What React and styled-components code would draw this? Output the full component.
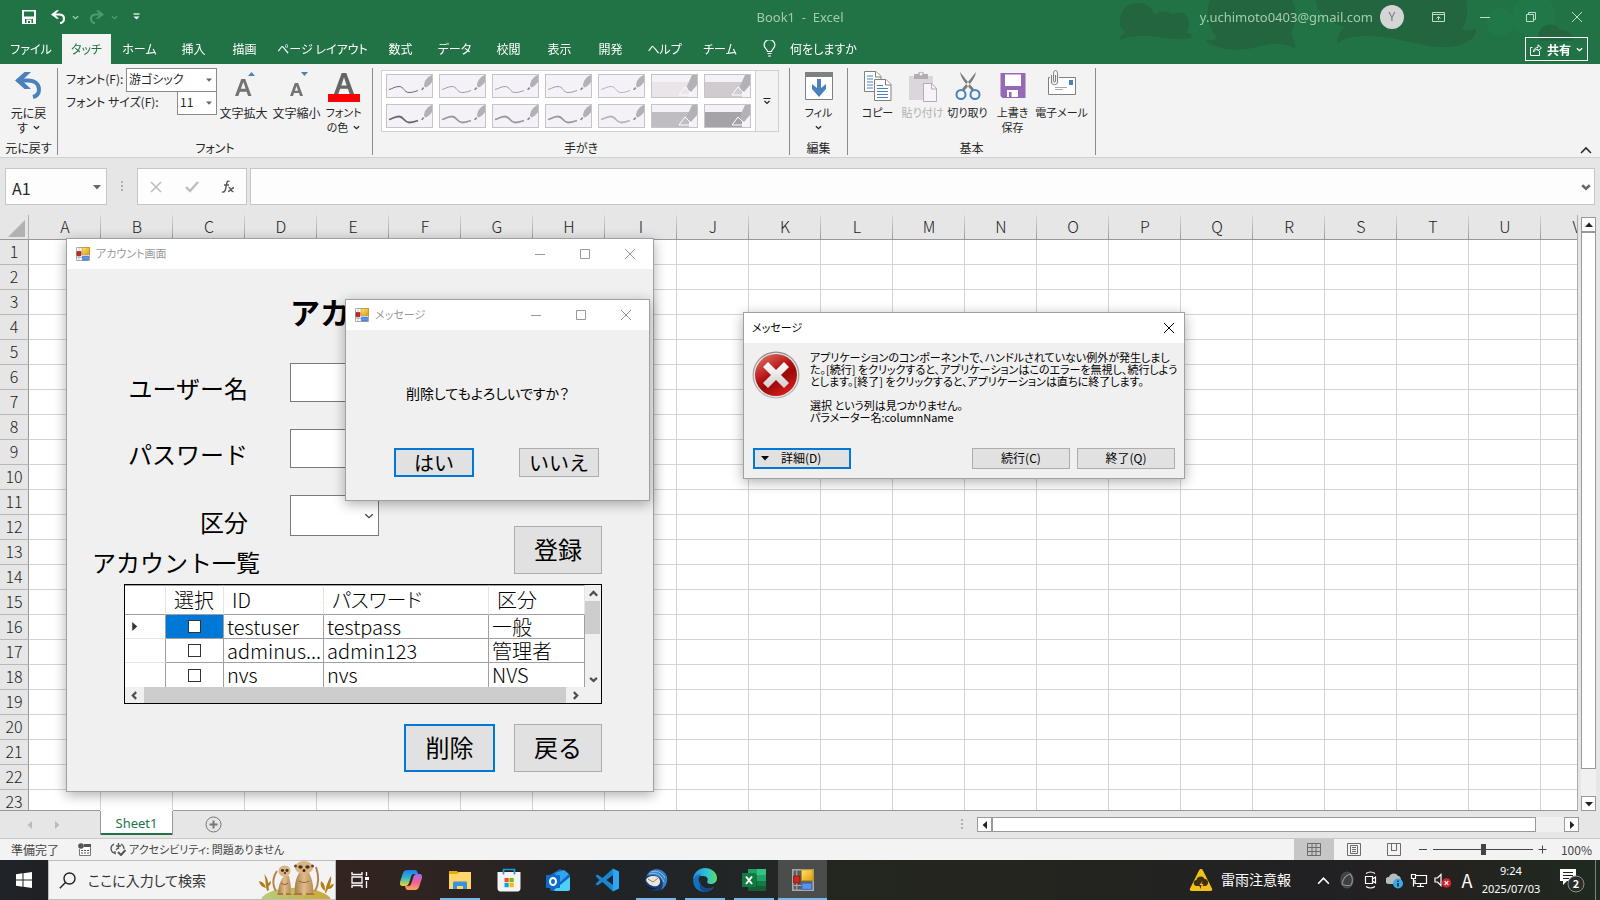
import React from 'react';
import styled, { createGlobalStyle, css } from 'styled-components';

const GlobalStyle = createGlobalStyle`
  * { box-sizing: border-box; }
  body {
    margin: 0;
    overflow: hidden;
    font-family: "Noto Sans CJK JP", "Noto Sans", sans-serif;
    font-size: 12px;
    line-height: 15px;
    color: #262626;
    font-feature-settings: "palt";
  }
  button, input, select {
    font: inherit;
    font-feature-settings: inherit;
    color: inherit;
    margin: 0;
    padding: 0;
    border: 0;
    border-radius: 0;
    background: none;
    outline: 0;
  }
  h1, h2, p { margin: 0; font: inherit; }
  svg { display: block; flex: none; }
`;

const Desktop = styled.div`
  position: relative;
  display: flex;
  flex-direction: column;
  height: 100vh;
  overflow: hidden;
  background: #e6e6e6;
`;

/* ---------- Title bar and tabs ---------- */

const Header = styled.header`
  position: relative;
  flex: none;
  background: #217346;
  color: #fff;
`;

const HeaderArt = styled.svg`
  position: absolute;
  top: 0;
  right: 0;
`;

const TitleBar = styled.div`
  position: relative;
  display: grid;
  grid-template-columns: 1fr auto 1fr;
  align-items: center;
  height: 34px;
  color: #a3cbb3;
  font-family: "Noto Sans", sans-serif;
  font-size: 13px;
`;

const QuickAccess = styled.div`
  display: flex;
  align-items: center;
  gap: 11px;
  padding-left: 22px;
`;

const IconButton = styled.button`
  display: flex;
  align-items: center;
  justify-content: center;
`;

const SaveButton = styled(IconButton)`
  width: 18px;
  justify-content: flex-start;
`;

const SplitButton = styled(IconButton)`
  gap: 7px;
`;

const DocTitle = styled.h1`
  white-space: pre;
  font-size: 13px;
`;

const Account = styled.div`
  display: flex;
  align-items: center;
  justify-content: flex-end;
`;

const Avatar = styled.span`
  width: 24px;
  height: 24px;
  margin: 0 12px 0 7px;
  border-radius: 50%;
  background: #d5d5d5;
  color: #6a7f74;
  font-size: 12px;
  line-height: 24px;
  text-align: center;
`;

const CaptionButton = styled(IconButton)`
  width: 46px;
  height: 30px;
  align-self: flex-start;
`;

const TabRow = styled.nav`
  position: relative;
  display: flex;
  align-items: flex-end;
  height: 30px;
  padding-right: 12px;
`;

const Tab = styled.button`
  flex: none;
  width: ${p => p.$w ? `${p.$w}px` : 'auto'};
  height: 30px;
  padding-bottom: 2px;
  text-align: center;
  white-space: nowrap;
  color: #fff;
  ${p => p.$active && css`
    background: #f3f3f3;
    color: #217346;
  `}
`;

const TellMe = styled(Tab)`
  display: flex;
  align-items: center;
  gap: 14px;
  padding-left: 16px;
  margin-right: auto;
`;

const ShareButton = styled.button`
  display: flex;
  align-items: center;
  gap: 5px;
  height: 24px;
  margin-bottom: 3px;
  padding: 0 4px;
  border: 1px solid #fff;
  font-weight: 700;
`;

/* ---------- Ribbon ---------- */

const Ribbon = styled.section`
  display: flex;
  flex: none;
  height: 94px;
  padding-top: 4px;
  background: #f3f3f3;
  border-bottom: 1px solid #d0d0d0;
`;

const Group = styled.div`
  display: flex;
  flex-direction: column;
  justify-content: space-between;
  height: 87px;
  padding: 0 ${p => p.$pad || 0}px;
  border-right: 1px solid #8a8a8a;
`;

const GroupTools = styled.div`
  display: flex;
`;

const GroupLabel = styled.div`
  text-align: center;
  white-space: nowrap;
  line-height: 14px;
`;

const BigButton = styled.button`
  display: flex;
  flex-direction: column;
  align-items: center;
  width: ${p => p.$wide ? 53 : 45}px;
  font-size: ${p => p.$kana ? 11 : 12}px;
  white-space: nowrap;
  color: ${p => p.disabled ? '#b1b1b1' : '#262626'};
`;

const SmallButton = styled(BigButton)`
  width: 41px;
`;

const RowButton = styled(BigButton)`
  width: 57px;
`;

const LabelLine = styled.span`
  display: flex;
  align-items: center;
  gap: 5px;
  height: 15px;
`;

const FontFields = styled.div`
  width: 151px;
`;

const FontField = styled.div`
  display: flex;
  align-items: center;
  justify-content: space-between;
  height: 23px;
  white-space: nowrap;
  label { padding-bottom: 2px; }
`;

const Combo = styled.span`
  display: grid;
  align-items: center;
  width: ${p => p.$narrow ? 40 : 91}px;
  height: 24px;
  border: 1px solid #8a8a8a;
  background: #fff;
  > * { grid-area: 1 / 1; }
  svg { justify-self: end; margin-right: 4px; pointer-events: none; }
  select { appearance: none; height: 100%; width: 100%; padding: 0 0 2px 2px; }
`;

const Gallery = styled.div`
  display: flex;
  margin: 2px 2px 0 0;
  border: 1px solid #d0d0d0;
  background: #fff;
`;

const PenGrid = styled.div`
  display: grid;
  grid-template-columns: repeat(7, 47px);
  gap: 6px;
  padding: 3px 4px;
`;

const PenButton = styled.button`
  height: 24px;
  border: 1px solid #c6c4c6;
  background: #f5f1f8;
`;

const GalleryMore = styled(IconButton)`
  width: 23px;
  border-left: 1px solid #d0d0d0;
  background: #f3f3f3;
`;

const CollapseButton = styled(IconButton)`
  align-self: flex-end;
  margin: 0 7px 2px auto;
  width: 14px;
  height: 10px;
`;

/* ---------- Formula bar ---------- */

const FormulaBar = styled.div`
  display: flex;
  flex: none;
  align-items: center;
  height: 57px;
  padding: 0 5px 0 5px;
`;

const BarBox = styled.div`
  display: flex;
  align-items: center;
  justify-content: space-between;
  height: 37px;
  border: 1px solid #c6c6c6;
  background: #fdfdfd;
`;

const NameBox = styled(BarBox)`
  width: 102px;
  padding: 0 5px 0 6px;
  input { width: 60px; padding-top: 2px; font-size: 16px; line-height: 20px; }
`;

const FormulaTools = styled(BarBox)`
  width: 110px;
  margin: 0 3px 0 14px;
  padding: 0 11px;
`;

const FormulaInput = styled(BarBox)`
  flex: 1;
  padding: 0 3px 0 8px;
  input { flex: 1; height: 100%; font-size: 16px; }
`;

const Dots = styled.span`
  width: 2px;
  height: 11px;
  margin-left: ${p => p.$gap || 0}px;
  background: repeating-linear-gradient(#b0b0b0 0 2px, transparent 2px 4px);
`;

/* ---------- Sheet ---------- */

const SheetArea = styled.main`
  display: grid;
  grid-template-columns: 1fr 22px;
  flex: 1;
  min-height: 0;
`;

const SheetViewport = styled.div`
  min-height: 0;
  overflow: hidden;
  border-bottom: 1px solid #999;
  border-right: 1px solid #ababab;
`;

const SheetTable = styled.table`
  table-layout: fixed;
  width: 1613px;
  border-collapse: separate;
  border-spacing: 0;
  background: #fff;
  font-size: 16px;
  line-height: 20px;
  color: #222;
  th, td { height: 25px; padding: 0 0 2px; font-weight: 300; }
  td { border-right: 1px solid #d4d4d4; border-bottom: 1px solid #d4d4d4; }
`;

const ColumnHead = styled.th`
  border-bottom: 1px solid #999;
  background: linear-gradient(#d8d8d8, #9c9c9c) right / 1px 100% no-repeat #e6e6e6;
`;

const RowHead = styled.th`
  border-right: 1px solid #999;
  border-bottom: 1px solid #b8b8b8;
  background: #e6e6e6;
`;

const Corner = styled.th`
  width: 29px;
  border-right: 1px solid #b0b0b0;
  border-bottom: 1px solid #999;
  background: #e6e6e6;
  svg { margin: 4px 0 0 8px; }
`;

const VerticalBar = styled.div`
  display: flex;
  flex-direction: column;
  width: 15px;
  margin: 2px 0 0 3px;
  background: #f0f0f0;
`;

const HorizontalBar = styled.div`
  display: flex;
  flex: 0 0 602px;
  height: 15px;
  margin: 0 21px 0 14px;
  background: #f0f0f0;
`;

const ArrowButton = styled(IconButton)`
  flex: none;
  width: 15px;
  height: 15px;
  border: 1px solid #999;
  background: #fff;
`;

const Thumb = styled.div`
  border: 1px solid #999;
  background: #fff;
`;

const VerticalThumb = styled(Thumb)`
  flex: 1;
  margin-bottom: 27px;
`;

const HorizontalThumb = styled(Thumb)`
  flex: 1;
  margin-right: 28px;
`;

const SheetTabs = styled.div`
  display: flex;
  flex: none;
  align-items: center;
  height: 27px;
`;

const NavArrows = styled.div`
  display: flex;
  justify-content: space-between;
  width: 100px;
  padding: 0 39px 0 26px;
`;

const SheetTab = styled.button`
  align-self: flex-start;
  width: 73px;
  height: 24px;
  border: solid #999;
  border-width: 0 1px 0;
  background: #fff;
  box-shadow: inset 0 -2px #217346, 0 -1px #fff;
  color: #217346;
  font-family: "Noto Sans", sans-serif;
  font-size: 13px;
`;

const AddSheet = styled(IconButton)`
  margin: 0 auto 0 32px;
`;

const StatusBar = styled.footer`
  display: flex;
  flex: none;
  align-items: center;
  height: 22px;
  padding: 0 0 1px 11px;
  border-top: 1px solid #c8c8c8;
  background: #f3f3f3;
  color: #444;
`;

const StatusItem = styled.span`
  display: flex;
  align-items: center;
  gap: 3px;
  margin-right: 19px;
  font-size: ${p => p.$kana ? 11 : 12}px;
`;

const ViewButton = styled(IconButton)`
  width: 40px;
  height: 21px;
  background: ${p => p.$active ? '#c6c6c6' : 'none'};
`;

const ViewButtons = styled.div`
  display: flex;
  margin-left: auto;
`;

const ZoomSlider = styled.input`
  appearance: none;
  width: 100px;
  height: 14px;
  margin: 0 5px;
  background: linear-gradient(#444, #444) center / 100% 1px no-repeat;
  &::-webkit-slider-thumb {
    appearance: none;
    width: 5px;
    height: 11px;
    background: #444;
  }
`;

const ZoomText = styled.output`
  width: 53px;
  padding-right: 8px;
  text-align: right;
`;

/* ---------- Windows ---------- */

const Window = styled.section`
  position: absolute;
  border: 1px solid #a0a0a0;
  background: #f0f0f0;
  box-shadow: 0 3px 12px rgba(0, 0, 0, 0.32);
  color: #000;
`;

const AccountWindow = styled(Window)`
  left: 66px;
  top: 238px;
  width: 588px;
  height: 554px;
`;

const ConfirmWindow = styled(Window)`
  left: 345px;
  top: 299px;
  width: 305px;
  height: 202px;
`;

const ErrorWindow = styled(Window)`
  left: 743px;
  top: 312px;
  width: 442px;
  height: 167px;
`;

const WindowTitle = styled.header`
  display: flex;
  align-items: center;
  height: 30px;
  padding: 0 ${p => p.$plain ? '0 0 8px' : '1px 0 9px'};
  background: #fff;
  color: ${p => p.$plain ? '#000' : '#999'};
  font-size: 11px;
  h2 { margin: 0 auto 0 ${p => p.$plain ? 0 : 6}px; padding-bottom: 2px; }
`;

const WindowControl = styled(IconButton)`
  width: ${p => p.$plain ? 30 : 45}px;
  height: 30px;
  padding-bottom: 1px;
`;

const AccountBody = styled.div`
  display: flex;
  flex-direction: column;
  padding: 22px 51px 0 0;
  font-size: 24px;
  line-height: 24px;
  font-feature-settings: normal;
`;

const ScreenHeading = styled.h1`
  padding-left: 223px;
  font-size: 30px;
  font-weight: 700;
  line-height: 40px;
`;

const FormRow = styled.div`
  display: flex;
  align-items: flex-end;
  margin-top: 32px;
`;

const FormSide = styled.div`
  flex: 1;
`;

const Fields = styled.div`
  display: grid;
  grid-template-columns: 181px 220px;
  column-gap: 42px;
  row-gap: 27px;
  align-items: end;
  label { padding-bottom: 2px; text-align: right; }
`;

const TextBox = styled.input`
  height: 39px;
  border: 1px solid #7a7a7a;
  background: #fff;
`;

const TypeSelect = styled.span`
  display: grid;
  align-items: center;
  width: 89px;
  height: 41px;
  border: 1px solid #7a7a7a;
  background: #fff;
  > * { grid-area: 1 / 1; }
  svg { justify-self: end; margin-right: 4px; pointer-events: none; }
  select { appearance: none; width: 100%; height: 100%; }
`;

const ListHeading = styled.h2`
  margin: 14px 0 0 25px;
`;

const PushButton = styled.button`
  border: 1px solid #adadad;
  background: #e1e1e1;
  ${p => p.$focus && css`border: 2px solid #0078d7;`}
`;

const FormButton = styled(PushButton)`
  width: ${p => p.$focus ? 91 : 88}px;
  height: 48px;
  padding-bottom: 3px;
`;

const ButtonRow = styled.div`
  display: flex;
  justify-content: flex-end;
  gap: 19px;
  margin-top: 20px;
`;

const DataGrid = styled.div`
  display: grid;
  grid-template-columns: 1fr 16px;
  grid-template-rows: 102px 16px;
  margin: 10px 0 0 57px;
  border: 1px solid #000;
  background: #fff;
`;

const GridTable = styled.table`
  table-layout: fixed;
  width: 460px;
  border-collapse: separate;
  border-spacing: 0;
  font-size: 20px;
  line-height: 22px;
  font-weight: 300;
  font-feature-settings: "palt";
  text-align: left;
  td, th {
    height: 24px;
    padding: 0 0 0 3px;
    border-right: 1px solid #a0a0a0;
    border-bottom: 1px solid #a0a0a0;
    font-weight: 300;
    overflow: hidden;
    white-space: nowrap;
  }
  thead th { height: 30px; padding-left: 8px; border-right-color: #e5e5e5; border-top: 1px solid #a0a0a0; }
  tbody th { padding-left: 5px; border-bottom-color: #e5e5e5; }
  tbody tr:last-child > * { border-bottom: 0; }
`;

const CheckCell = styled.td`
  && { padding: 0 1px 0 0; text-align: center; line-height: 0; background: ${p => p.$selected ? '#0078d7' : '#fff'}; }
  input { appearance: none; width: 13px; height: 13px; border: 1px solid #333; background: #fff; }
`;

const GridVertical = styled.div`
  display: flex;
  flex-direction: column;
  background: #f0f0f0;
`;

const GridHorizontal = styled.div`
  display: flex;
  grid-column: 1 / 3;
  padding-right: 16px;
  background: #f0f0f0;
`;

const GridArrow = styled(IconButton)`
  flex: none;
  width: ${p => p.$side ? 19 : 16}px;
  height: 16px;
`;

const DownArrow = styled(GridArrow)`
  margin-top: auto;
`;

const GridThumb = styled.div`
  flex: ${p => p.$fill ? 1 : '0 0 33px'};
  margin-right: ${p => p.$fill ? 0 : 1}px;
  background: #cdcdcd;
`;

const ConfirmBody = styled.div`
  display: flex;
  flex-direction: column;
  align-items: center;
  padding-top: 53px;
  font-size: 14px;
  line-height: 20px;
  p { padding-right: 20px; }
`;

const ConfirmButtons = styled.div`
  display: flex;
  gap: 45px;
  margin: 45px 2px 0 0;
  font-size: 20px;
  font-feature-settings: normal;
`;

const ConfirmButton = styled(PushButton)`
  width: 80px;
  height: 29px;
  line-height: 20px;
`;

const ErrorBody = styled.div`
  display: flex;
  gap: 10px;
  height: 105px;
  padding: 8px 0 0 8px;
  font-size: 11px;
  line-height: 12px;
  white-space: pre;
`;

const ErrorButtons = styled.div`
  display: flex;
  gap: 7px;
  padding: 0 9px;
  button:first-child { margin-right: auto; }
`;

const ErrorButton = styled(PushButton)`
  display: flex;
  align-items: center;
  justify-content: center;
  gap: 12px;
  width: 98px;
  height: 21px;
  padding-bottom: 2px;
  ${p => p.$focus && css`
    justify-content: flex-start;
    padding-left: 6px;
  `}
`;

/* ---------- Taskbar ---------- */

const Taskbar = styled.footer`
  display: flex;
  flex: none;
  height: 40px;
  background: linear-gradient(90deg, #20242a 0, #1f2023 48px, #33241f 336px, #2c2422 460px, #202427 620px, #222626 760px, #24271e 860px, #23241f 1100px, #212124 1320px, #25211f 1440px, #1f2a20 1600px);
  color: #fff;
`;

const StartButton = styled(IconButton)`
  width: 48px;
`;

const SearchBox = styled.label`
  display: flex;
  align-items: center;
  width: 288px;
  margin-right: 1px;
  border: 1px solid #bdbdbd;
  background: #f3f3f3;
  color: #333;
  input { flex: 1; min-width: 0; margin-left: 12px; font-size: 14px; line-height: 20px; }
  input::placeholder { color: #333; opacity: 1; }
  > svg:first-child { margin-left: 10px; }
`;

const TaskButton = styled(IconButton)`
  width: 49px;
  height: 40px;
  ${p => p.$running && css`
    background: linear-gradient(#76b9ed, #76b9ed) center bottom / 40px 2px no-repeat;
  `}
  ${p => p.$active && css`
    background: linear-gradient(#76b9ed, #76b9ed) center bottom / 100% 2px no-repeat #4b4d4c;
  `}
`;

const Tray = styled.div`
  display: flex;
  align-items: center;
  gap: 4px;
  margin-left: auto;
  padding-right: 4px;
`;

const Weather = styled.button`
  display: flex;
  align-items: center;
  gap: 8px;
  margin-right: 18px;
  padding-bottom: 1px;
  font-size: 14px;
  font-feature-settings: normal;
`;

const TrayIcon = styled(IconButton)`
  width: 20px;
  height: 40px;
`;

const InputMode = styled(TrayIcon)`
  font-size: 18px;
`;

const Clock = styled.time`
  width: 60px;
  margin: 0 14px 0 0;
  font-family: "Noto Sans", sans-serif;
  font-size: 11px;
  line-height: 18px;
  text-align: center;
`;

const ShowDesktop = styled.button`
  height: 40px;
  width: 1px;
  margin-left: 6px;
  background: #7c827c;
`;

/* ---------- Drawings ---------- */

const Chevron = ({ w = 7, color = 'currentColor', up, sw = 1.5 }) => (
  <svg width={w} height={w} viewBox="0 0 8 8" fill="none" stroke={color} strokeWidth={sw}>
    <path d={up ? 'M.7 6 4 2.6 7.3 6' : 'M1 2.6 4 5.4 7 2.6'} />
  </svg>
);

const Triangle = ({ dir = 'down', size = 8, color = '#222' }) => {
  const d = { down: 'M0 2h8L4 6.4z', up: 'M0 6h8L4 1.6z', left: 'M6 0v8L1.6 4z', right: 'M2 0v8l4.400-4z' }[dir];
  return <svg width={size} height={size} viewBox="0 0 8 8"><path d={d} fill={color} /></svg>;
};

const HeaderDrawing = () => (
  <HeaderArt width="500" height="64" viewBox="1100 0 500 64" aria-hidden="true">
    <g fill="#217a4a" opacity=".6">
      <circle cx="1534" cy="16" r="22" />
      <circle cx="1500" cy="22" r="14" />
      <circle cx="1192" cy="24" r="10" opacity=".4" />
    </g>
    <g fill="#22653f">
      <path d="M1120 24c-1-12 6-21 18-21 9 0 14 5 17 12 6-5 14-4 18 0 8-6 16 0 16 9 0 5-1 7-3 9 8 1 8 6-2 6-16 1-28-4-41-3-11 0-17 2-23 4 1-5 3-7 5-8-3-2-5-5-5-8z" />
      <path d="M1210 0h82c5 8 5 20-1 34 3 4 4 9 4 14-14-6-26-5-38-1-18 5-44 3-52-8 6 2 9 1 12-1-9-12-12-26-7-38z" />
      <path d="M1316 0h150c3 12 0 22-4 30 6 1 11 0 14-2 1 12-15 20-36 19-24-1-44-11-70-11-18 0-27 2-33 8 0-8 3-13 8-17-17-5-28-14-29-27z" />
      <path d="M1538 37a12 12 0 0 1 22-7c9 0 14 5 14 11h-34z" />
    </g>
  </HeaderArt>
);

const SaveIcon = () => (
  <svg width="14" height="14" viewBox="0 0 14 14" fill="#fff"><path fillRule="evenodd" d="M0 0h14v14H0zM2 1.500v5h10v-5zM3 9v4h1.500V9.500h5V13H11V9z M6 11h2v2H6z" /></svg>
);

const UndoIcon = ({ color = '#fff', size = 14, flip }) => (
  <svg width={size} height={size} viewBox="0 0 14 14">
    <g transform={flip ? 'translate(14 0) scale(-1 1)' : undefined}>
      <path d="M1.500 4.500h6.500c3 0 5 1.700 5 4.200S11 13 9 13.200" fill="none" stroke={color} strokeWidth="2.200" />
      <path d="M0 4.500 5.600.2H8L3.800 4.500 8 8.800H5.600z" fill={color} />
    </g>
  </svg>
);

const BigUndo = () => (
  <svg width="30" height="37" viewBox="0 0 30 37">
    <path d="M3 12.500h11c7 0 11 3.500 11 9 0 3.500-2 6.500-6 7.500" fill="none" stroke="#4a81bd" strokeWidth="4" />
    <path d="M1 12.500 10.500 4H17l-9 8.500 9 8.500h-6.500z" fill="#4a81bd" />
  </svg>
);

const LetterIcon = ({ kind }) => (
  <svg width="32" height="37" viewBox="0 0 32 37">
    {kind === 'grow' && <>
      <path fillRule="evenodd" fill="#737373" d="M7 28 13.300 11h3.900L23.500 28h-3.400l-1.500-4.300h-6.700L10.300 28zm5.900-7.200h4.800L15.300 14z" />
      <path d="M20 8h7l-3.500-4z" fill="#4a81bd" />
    </>}
    {kind === 'shrink' && <>
      <path fillRule="evenodd" fill="#737373" d="M9 28 13.800 15h3.300L22 28h-3l-1-3h-5l-1 3zm4.800-5.300h3.300L15.500 18z" />
      <path d="M20 4h7l-3.500 4z" fill="#4a81bd" />
    </>}
    {kind === 'color' && <>
      <path fillRule="evenodd" fill="#666" d="M6 26 13.700 5h4.600L26 26h-4.300l-1.800-5.200h-7.800L10.300 26zm7.300-8.600h5.400L16 9.200z" />
      <path d="M0 26h32v8H0z" fill="#f00" />
    </>}
  </svg>
);

const PenStroke = ({ color, thick }) => (
  <svg width="45" height="22" viewBox="0 0 45 22">
    <path d="M2 14.500c4-1 6-3 10-3 5 0 5 6 10 6 4 0 6-1 9-2" fill="none" stroke={color} strokeWidth={thick ? 1.800 : 1} />
    <path d="M34 14.500 36 12l1.300 1.300-2 2z" fill="#8a888a" />
    <path d="M37 11c0-5 3-9 8-11v7c-2 3-4 4.500-6.500 5.500z" fill="#b3b1b5" />
  </svg>
);

const Highlighter = ({ color }) => (
  <svg width="45" height="22" viewBox="0 0 45 22">
    <path d="M0 7h37v15H0z" fill={color} />
    <path d="m27 20 6-8 6 6-2 2z" fill="none" stroke="#fff" />
    <path d="M35 11 40 0h5v10l-6 7c-2-1-4-3-4-6z" fill="#b3b1b5" />
  </svg>
);

const FillIcon = () => (
  <svg width="28" height="37" viewBox="0 0 28 37">
    <path d="M.5 4.500h27v27H.5z" fill="#fff" stroke="#808080" />
    <path d="M0 4h28v5H0z" fill="#808080" />
    <path d="M12 11h4v9l5-4v5l-7 8-7-8v-5l5 4z" fill="#4a81bd" />
  </svg>
);

const CopyIcon = () => (
  <svg width="28" height="37" viewBox="0 0 28 37" fill="#fff" stroke="#808080">
    <path d="M.5 3.500H12l5 5v15H.5z" /><path d="M11.500 3.500V9H17" />
    <path d="M3 8h6M3 11h6M3 14h6M3 17h6M3 20h6" stroke="#4a81bd" />
    <path d="M10.500 11.500H22l5 5v16H10.500z" /><path d="M21.500 11.500V17H27" />
    <path d="M13 17.500h6M13 20.500h11M13 23.500h11M13 26.500h11M13 29.500h11" stroke="#4a81bd" />
  </svg>
);

const PasteIcon = () => (
  <svg width="28" height="37" viewBox="2 0 28 37">
    <path d="M2 8h24v24H2z" fill="#dad6db" />
    <path d="M7 6h4c0-3 6-3 6 0h4v5H7z" fill="#b1adb3" /><circle cx="14" cy="6" r="1.500" fill="#f3f3f3" />
    <path d="M16.500 15.500H25l4.500 5v13h-13z" fill="#f8f3fa" stroke="#b1adb3" /><path d="M24.500 15.500V21h5" fill="none" stroke="#b1adb3" />
  </svg>
);

const CutIcon = () => (
  <svg width="26" height="37" viewBox="0 0 26 37" fill="none">
    <path d="M5 4c1 6 5 11 12 19l2-2C13 14 8 8 5 4zM21 4c-1 6-5 11-12 19l-2-2C13 14 18 8 21 4z" fill="#7b7b7b" />
    <circle cx="6" cy="26.500" r="4.500" stroke="#4a81bd" strokeWidth="2" /><circle cx="20" cy="26.500" r="4.500" stroke="#4a81bd" strokeWidth="2" />
  </svg>
);

const PurpleSave = () => (
  <svg width="26" height="37" viewBox="0 0 26 37">
    <path d="M.5 5h25v25h-23l-2-2z" fill="#9668b8" />
    <path d="M5 6.500h16V18H5zM7 22h11v7h-6.500v-5H9v5H7z" fill="#fff" />
  </svg>
);

const MailIcon = () => (
  <svg width="28" height="37" viewBox="0 0 28 37" fill="none" stroke="#808080">
    <path d="M.5 9.500h27v17H.5z" fill="#fff" />
    <path d="M21 12h4v5h-4z" fill="#4a81bd" stroke="none" />
    <path d="M7 19.500h12M7 21.500h8" stroke="#aaa" />
    <path d="M3.500 8v6c0 3.500 6 3.500 6 0V5.500c0-4-4-4-4 0V13c0 1.500 2 1.500 2 0V7" stroke="#f3f3f3" strokeWidth="3" />
    <path d="M3.500 7v7c0 3.500 6 3.500 6 0V5.500c0-4-4-4-4 0V13c0 1.500 2 1.500 2 0V7" />
  </svg>
);

const BulbIcon = () => (
  <svg width="13" height="17" viewBox="0 0 13 17" fill="none" stroke="#fff" strokeWidth="1.200">
    <path d="M4.500 11.500c0-2-3.400-3-3.400-6.400a5.400 5.400 0 0 1 10.800 0c0 3.400-3.400 4.400-3.400 6.400zM4.500 13.500h4M5 16h3" />
  </svg>
);

const ShareIcon = () => (
  <svg width="12" height="13" viewBox="0 0 12 13" fill="none" stroke="#fff">
    <path d="M2.500 4.500h-2v8h9V8M3.500 9c0-3 2-4.500 4.500-4.500V1.800L11.400 5 8 8V6.300C6 6.300 4.500 7.300 3.500 9z" />
  </svg>
);

const FormIcon = ({ size = 14, gray }) => (
  <svg width={size} height={size} viewBox="0 0 14 14">
    <defs><linearGradient id="gold" x2="1" y2="1"><stop stopColor="#ffe27a" /><stop offset="1" stopColor="#dd9d00" /></linearGradient></defs>
    <path d="M.5.500h13v13H.5z" fill={gray ? '#5c5c5c' : '#fff'} stroke="#aaa" />
    <path d="M3 1v12M1 10.500h12" stroke="#aaa" strokeWidth=".7" />
    <path d="M6 .5h7.500v7H6z" fill="url(#gold)" stroke="#b98a1c" strokeWidth=".6" />
    <path d="M1 4.500h4v4.300H1z" fill="#c9281c" stroke="#8d1b12" strokeWidth=".6" />
    <path d="M6.300 9h6.200v4H6.300z" fill="#5b92ea" stroke="#3a6bc4" strokeWidth=".6" />
  </svg>
);

const WindowGlyph = ({ kind, color = '#999' }) => (
  <svg width="12" height="12" viewBox="0 0 12 12" fill="none" stroke={color} overflow="visible">
    {kind === 'min' && <path d="M1 6.500h10" />}
    {kind === 'max' && <path d="M1.500 1.500h9v9h-9z" />}
    {kind === 'close' && <path d="m1 1 10 10M11 1 1 11" />}
    {kind === 'restore' && <path d="M1.500 3.500h7v7h-7zM3.500 3V1.500h7v7H9" />}
    {kind === 'ribbon' && <path d="M-.5 1.500h12v9h-12zM-.5 3.500h12M5.500 9V5.500M3.500 7.500l2-2 2 2" />}
  </svg>
);

const ErrorIcon = () => (
  <svg width="48" height="48" viewBox="0 0 48 48">
    <defs>
      <linearGradient id="red" x1=".2" x2=".8" y2="1"><stop stopColor="#dd6a60" /><stop offset=".45" stopColor="#b30f0f" /><stop offset=".6" stopColor="#9c0808" /><stop offset="1" stopColor="#e02020" /></linearGradient>
      <linearGradient id="rim" x2="0" y2="1"><stop stopColor="#8b8b8b" /><stop offset="1" stopColor="#b9b9b9" /></linearGradient>
      <linearGradient id="cross" x2="0" y2="1"><stop stopColor="#fff" /><stop offset="1" stopColor="#cfcfcf" /></linearGradient>
    </defs>
    <circle cx="24" cy="24" r="23.500" fill="url(#rim)" /><circle cx="24" cy="24" r="22.300" fill="#e6e6e6" />
    <circle cx="24" cy="24" r="21" fill="url(#red)" />
    <path d="m16 11 8 8 8-8 5 5-8 8 8 8-5 5-8-8-8 8-5-5 8-8-8-8z" fill="url(#cross)" />
  </svg>
);

const MacroIcon = () => (
  <svg width="13" height="13" viewBox="0 0 13 13"><path d="M1.500 6v6.500h11v-9h-6" fill="#fff" stroke="#777" /><path d="M6 1h7v3H6z" fill="#555" /><circle cx="3" cy="3" r="2.800" fill="#555" /><path d="M3 7.500h2M6 7.500h2M9 7.500h2M3 10h2M6 10h2M9 10h2" stroke="#555" /></svg>
);

const AccessIcon = () => (
  <svg width="16" height="14" viewBox="0 0 16 14" fill="none" stroke="#555" strokeWidth="1.300"><path d="M4 2C0 4 0 9 4 11l2 1M5 12V9M11 2c2 1 3 3 3 5M6 4h5M8.500 1v6M6 8l2-2" /><path d="m8 10 3 3 4.500-5" strokeWidth="2" /></svg>
);

const ViewGlyph = ({ kind }) => (
  <svg width="14" height="13" viewBox="0 0 14 13" fill="none" stroke="#6b6b6b">
    <path d="M.5.500h13v12H.5z" />
    {kind === 'normal' && <path d="M5 0v13M9 0v13M0 4.500h14M0 8.500h14" />}
    {kind === 'layout' && <path d="M3.500 2.500h7v8h-7zM5 4.500h4M5 6.500h4M5 8.500h4" />}
    {kind === 'break' && <path d="M4.500 0v7.500h5V0M9 7.500H4" />}
  </svg>
);

const Meerkats = () => (
  <svg width="76" height="38" viewBox="0 0 76 38">
    <defs>
      <linearGradient id="hill"><stop stopColor="#b9cd7a" /><stop offset="1" stopColor="#cda637" /></linearGradient>
      <linearGradient id="fur"><stop stopColor="#a97c48" /><stop offset=".5" stopColor="#dfbd8a" /><stop offset="1" stopColor="#b98c55" /></linearGradient>
    </defs>
    <path d="M2 38c8-15 60-15 70 0z" fill="url(#hill)" />
    <path d="M17 30C12 22 15 14 18 10" fill="none" stroke="#b18450" strokeWidth="2" />
    <path d="M56 30c5-8 3-18 1-24" fill="none" stroke="#b18450" strokeWidth="2" />
    <path d="M19 34c0-10 3-15 6-19h5c1 6 3 11 1 19z" fill="url(#fur)" />
    <path d="M36 34c-1-10 1-17 4-22h10c3 5 5 14 4 22z" fill="url(#fur)" />
    <ellipse cx="25.500" cy="10" rx="6" ry="5.500" fill="#d8b581" /><ellipse cx="45" cy="6.500" rx="9" ry="6.500" fill="#d8b581" />
    <ellipse cx="23.500" cy="9.500" rx="1.600" ry="1.400" fill="#4a2f1d" /><ellipse cx="28" cy="9.500" rx="1.600" ry="1.400" fill="#4a2f1d" /><circle cx="26" cy="12" r="1" fill="#3b2518" />
    <ellipse cx="41.500" cy="6" rx="2.200" ry="1.700" fill="#4a2f1d" /><ellipse cx="48.500" cy="6" rx="2.200" ry="1.700" fill="#4a2f1d" /><circle cx="45" cy="9.500" r="1.500" fill="#3b2518" />
    <circle cx="36.500" cy="5" r="1.500" fill="#6b4426" /><circle cx="53.500" cy="5" r="1.500" fill="#6b4426" />
    <path d="M40 20c3 2 7 2 10 0M22 22c2 2 5 2 7 0" fill="none" stroke="#8d6238" />
    <path d="M34 34h9v-2h-7zM47 34h9l-2-2h-7zM18 34h6v-2h-5zM27 34h6l-2-2h-4z" fill="#a87641" />
    <path d="M8 30C6 22 7 18 5 13c5 5 4 10 5 16zM7 27c-4-1-6-3-7-7 4 1 6 3 7 7zM8 26c0-3 2-5 4-6 0 3-1 5-4 6zM66 32c1-8 3-12 6-17 1 7-2 11-5 17zM66 30c-4-3-5-6-4-10 4 3 4 6 4 10zM69 28c1-3 3-5 6-5-1 3-3 5-6 5z" fill="#b27c16" />
  </svg>
);

const AppIcon = ({ name }) => {
  const svg = kids => <svg width="24" height="24" viewBox="0 0 24 24">{kids}</svg>;
  switch (name) {
    case 'tasks': return svg(<g fill="none" stroke="#fff" strokeWidth="1.300"><path d="M2 4v2.500h10V4M2 20v-2.500h10V20M2 9h10v6H2zM16.500 4v4M16.500 13v7" /><path d="M15 9h4v3h-4z" fill="#fff" stroke="none" /></g>);
    case 'copilot': return svg(<>
      <defs>
        <linearGradient id="cpa" x2="0" y2="1"><stop stopColor="#1c7ef0" /><stop offset=".5" stopColor="#35b7c2" /><stop offset="1" stopColor="#f2d42c" /></linearGradient>
        <linearGradient id="cpb" x2="0" y2="1"><stop stopColor="#a569f5" /><stop offset=".5" stopColor="#ef5f95" /><stop offset="1" stopColor="#ffa45c" /></linearGradient>
      </defs>
      <path d="M8 2h8c2 0 2.500 2 3 4h-4c-2 0-2.500 1-3 3l-2 6c-.7 2-1.500 3-4 3H4c-3 0-3.500-2-2.700-5L4 5c.7-2 2-3 4-3z" fill="url(#cpa)" />
      <path d="M16 22H9c-2 0-2.500-2-3-4h3c2 0 2.800-1 3.400-3l2-6c.6-2 1.500-3 3.600-3h2c3 0 3.500 2 2.700 5L20 19c-.7 2-2 3-4 3z" fill="url(#cpb)" />
    </>);
    case 'explorer': return svg(<><path d="M1 3h8l2 2h12v16H1z" fill="#e8a80e" /><path d="M1 6h8l2-2h12v17H1z" fill="#ffd768" /><path d="M5 21v-6c0-1 .6-1.500 1.500-1.500h11c1 0 1.500.5 1.500 1.500v6h-4v-3H9v3z" fill="#3b92dc" /></>);
    case 'store': return svg(<><path d="M.5 4h23v16c0 2-1 3.500-3 3.500h-17c-2 0-3-1.500-3-3.500z" fill="#f4f4f4" /><path d="M6.500 6.500v-5h11v5" fill="none" stroke="#1e9ae0" strokeWidth="1.700" /><path d="M7.500 10h4.200v4.200H7.500z" fill="#f25022" /><path d="M12.500 10h4.200v4.200h-4.200z" fill="#7fba00" /><path d="M7.500 15h4.200v4.200H7.500z" fill="#00a4ef" /><path d="M12.500 15h4.200v4.200h-4.200z" fill="#ffb900" /></>);
    case 'outlook': return svg(<><path d="m4 7 10-6 10 6v14c0 1-1 2-2 2H6c-1 0-2-1-2-2z" fill="#1565c0" /><path d="m9 5 9-3 5 4-10 9z" fill="#32a4ec" /><path d="m24 9-16 13 1 1h13c1 0 2-1 2-2z" fill="#4ed0f7" /><path d="M1 7h12c.6 0 1 .4 1 1v11c0 .6-.4 1-1 1H1c-.6 0-1-.4-1-1V8c0-.6.4-1 1-1z" fill="#0b6ccc" /><ellipse cx="7" cy="13.500" rx="3" ry="3.500" fill="none" stroke="#fff" strokeWidth="2" /></>);
    case 'code': return svg(<><path d="M18 .5 7.500 10 2.500 6.500.5 8l4 4-4 4 2 1.500 5-3.500L18 23.500v-6.500l-6.500-5L18 7z" fill="#1c85d0" /><path d="m18 .5 6 3v17l-6 3z" fill="#2aa6f2" /></>);
    case 'thunderbird': return svg(<><circle cx="12" cy="12" r="11" fill="#173a70" /><path d="M3 8C6-1 20-1 23 9c1 6-2 11-6 13 3-5 2-10-2-13-4-2-8-2-12-1z" fill="#3a80c4" /><path d="M7 4c5-2 11 0 14 6M5 6c6-2 12 0 15 8" fill="none" stroke="#8cc0ea" /><path d="M2 12c1-4 8-5 12-3 3 3 3 7-1 9-4 1-9-1-11-6z" fill="#ece5da" /><path d="m4 11 5 3 5-4" fill="none" stroke="#8f806d" /><path d="M1.500 14c1 5 6 7 11 6-4 3-10 1-11-6z" fill="#0d1830" /></>);
    case 'edge': return svg(<>
      <defs><linearGradient id="ed"><stop stopColor="#1c8fe0" /><stop offset=".6" stopColor="#30c3d4" /><stop offset="1" stopColor="#5fdd5a" /></linearGradient></defs>
      <path d="M0 12C0 5 5.500 0 12 0s12 4.500 12 10c0 4-3 6-6.500 6-3 0-4-1.500-3-3 1-2-.5-5-4.500-5C5 8 1 10 0 12z" fill="url(#ed)" />
      <path d="M0 12c1-4 5-6 8.500-5.500C6 8 4.500 12 7 16c3 5 9 6 14 3-4 6-13 6.500-18 1.500C1 18 0 15 0 12z" fill="#1570c0" />
      <path d="M8 11c-2 6 3 12 13 8-2 3-6 5-9 5-5 0-7-6-4-13z" fill="#144a8c" /></>);
    case 'excel': return svg(<><path d="M6 1h9v7H6z" fill="#21a366" /><path d="M15 1h9v7h-9z" fill="#33c481" /><path d="M6 7h9v6H6z" fill="#107c41" /><path d="M15 7h9v6h-9z" fill="#21a366" /><path d="M15 13h9v5h-9z" fill="#107c41" /><path d="M6 13h9v5H6zM6 18h18v5H6z" fill="#185c37" /><path d="M0 5h14v14H0z" fill="#107c41" /><path d="m4 8.500 6 7.500M10 8.500 4 16" stroke="#fff" strokeWidth="2" /></>);
    default: return <FormIcon size={22} gray />;
  }
};

const TrayGlyph = ({ name }) => {
  const svg = kids => <svg width="18" height="18" viewBox="0 0 18 18" fill="none" stroke="#fff" strokeWidth="1.200">{kids}</svg>;
  switch (name) {
    case 'globe': return svg(<><ellipse cx="9" cy="9" rx="6" ry="8" fill="#3d3f40" stroke="#4d4f50" /><path d="M4 13c1-5 4-9 8-10 3 3 3 8 1 11-3 1-6 1-9-1z" stroke="#8e9091" /></>);
    case 'meet': return svg(<><path d="M3.500 5.500h7v7h-7zM10.500 8l3-2v6l-3-2M4 2.500c3-2 6-2 9 0M4 15.500c3 2 6 2 9 0" /></>);
    case 'cloud': return svg(<><path d="M3 13a3.500 3.500 0 0 1 0-7c1-4 7-5 9-1 2 0 3 2 3 4v4z" fill="#b9bcbd" stroke="none" /><circle cx="12" cy="12.500" r="5" fill="#3aa9e8" stroke="none" /><path d="M12 12v3.500M12 9.500V11" stroke="#102030" strokeWidth="1.500" /></>);
    case 'network': return svg(<><path d="M5 4.500h11.500v8H5V9M10.500 12.500v3M7 15.500h7M1.500 3.500h4v4h-4zM3.500 7.500v8" /></>);
    default: return svg(<><path d="M1 7v4h2.500L7 14.500v-11L3.500 7z" /><circle cx="12.500" cy="12" r="4.700" fill="#d6232f" stroke="none" /><path d="m10.700 10.200 3.600 3.600m0-3.600-3.600 3.600" /></>);
  }
};

/* ---------- Content ---------- */

const TABS = [
  ['ファイル', 62], ['タッチ', 49], ['ホーム', 57], ['挿入', 51], ['描画', 51], ['ページ レイアウト', 105],
  ['数式', 51], ['データ', 57], ['校閲', 51], ['表示', 51], ['開発', 51], ['ヘルプ', 57], ['チーム', 54],
];
const THIN = ['#6a686a', '#a09ea0', '#a09ea0', '#a09ea0', '#b8b5b8'];
const THICK = ['#6a686a', '#9b999b', '#9b999b', '#9b999b', '#b8b5b8'];
const COLUMNS = Array.from({ length: 22 }, (_, i) => String.fromCharCode(65 + i));
const ROWS = Array.from({ length: 23 }, (_, i) => i + 1);
const USERS = [['testuser', 'testpass', '一般'], ['adminus...', 'admin123', '管理者'], ['nvs', 'nvs', 'NVS']];
const APPS = [['tasks'], ['copilot'], ['explorer', 1], ['store'], ['outlook'], ['code'], ['thunderbird', 1], ['edge', 1], ['excel', 1], ['forms', 1, 1]];

const WindowControls = () => (
  <>
    <WindowControl aria-label="最小化"><WindowGlyph kind="min" /></WindowControl>
    <WindowControl aria-label="最大化"><WindowGlyph kind="max" /></WindowControl>
    <WindowControl aria-label="閉じる"><WindowGlyph kind="close" /></WindowControl>
  </>
);

const ExcelHeader = () => (
  <Header>
    <HeaderDrawing />
    <TitleBar>
      <QuickAccess>
        <SaveButton aria-label="保存"><SaveIcon /></SaveButton>
        <SplitButton aria-label="元に戻す"><UndoIcon /><Chevron color="#a3cbb3" /></SplitButton>
        <SplitButton aria-label="やり直し"><UndoIcon color="#4f9a70" flip /><Chevron color="#4f9a70" /></SplitButton>
        <IconButton aria-label="カスタマイズ">
          <svg width="14" height="8" viewBox="0 0 14 8"><path d="M4.500 1h6" stroke="#fff" strokeWidth="1.200" /><path d="M4.500 3.500h6l-3 3z" fill="#fff" /></svg>
        </IconButton>
      </QuickAccess>
      <DocTitle>{'Book1  -  Excel'}</DocTitle>
      <Account>
        <span>y.uchimoto0403@gmail.com</span>
        <Avatar>Y</Avatar>
        {['ribbon', 'min', 'restore', 'close'].map(k => (
          <CaptionButton key={k} aria-label={k}><WindowGlyph kind={k} color="#c0dccb" /></CaptionButton>
        ))}
      </Account>
    </TitleBar>
    <TabRow>
      {TABS.map(([t, w], i) => <Tab key={t} $w={w} $active={i === 1}>{t}</Tab>)}
      <TellMe><BulbIcon />何をしますか</TellMe>
      <ShareButton><ShareIcon />共有<Chevron /></ShareButton>
    </TabRow>
  </Header>
);

const ExcelRibbon = () => (
  <Ribbon>
    <Group>
      <RowButton><BigUndo /><span>元に戻</span><LabelLine>す<Chevron /></LabelLine></RowButton>
      <GroupLabel>元に戻す</GroupLabel>
    </Group>
    <Group $pad={8}>
      <GroupTools>
        <FontFields>
          <FontField>
            <label htmlFor="font">フォント(F):</label>
            <Combo><select id="font"><option>游ゴシック</option></select><Triangle size={6} color="#666" /></Combo>
          </FontField>
          <FontField>
            <label htmlFor="size">フォント サイズ(F):</label>
            <Combo $narrow><select id="size"><option>11</option></select><Triangle size={6} color="#666" /></Combo>
          </FontField>
        </FontFields>
        <BigButton $wide><LetterIcon kind="grow" />文字拡大</BigButton>
        <BigButton $wide><LetterIcon kind="shrink" />文字縮小</BigButton>
        <SmallButton $kana><LetterIcon kind="color" /><span>フォント</span><LabelLine>の色<Chevron /></LabelLine></SmallButton>
      </GroupTools>
      <GroupLabel>フォント</GroupLabel>
    </Group>
    <Group $pad={8}>
      <Gallery>
        <PenGrid>
          {THIN.map((c, i) => <PenButton key={i} aria-label="ペン"><PenStroke color={c} /></PenButton>)}
          {['#e9e5e9', '#cfcbcf'].map(c => <PenButton key={c} aria-label="蛍光ペン"><Highlighter color={c} /></PenButton>)}
          {THICK.map((c, i) => <PenButton key={i} aria-label="ペン"><PenStroke color={c} thick /></PenButton>)}
          {['#bfbdc1', '#a5a3a7'].map(c => <PenButton key={c} aria-label="蛍光ペン"><Highlighter color={c} /></PenButton>)}
        </PenGrid>
        <GalleryMore aria-label="その他">
          <svg width="8" height="8" viewBox="0 0 8 8" fill="none" stroke="#222"><path d="M.5 1.500h7M1.500 4 4 6.500 6.500 4" strokeWidth="1.200" /></svg>
        </GalleryMore>
      </Gallery>
      <GroupLabel>手がき</GroupLabel>
    </Group>
    <Group>
      <RowButton $kana><FillIcon /><span>フィル</span><LabelLine><Chevron /></LabelLine></RowButton>
      <GroupLabel>編集</GroupLabel>
    </Group>
    <Group $pad={7}>
      <GroupTools>
        <BigButton $kana><CopyIcon />コピー</BigButton>
        <BigButton $kana disabled><PasteIcon />貼り付け</BigButton>
        <BigButton $kana><CutIcon />切り取り</BigButton>
        <BigButton $kana><PurpleSave /><span>上書き</span><span>保存</span></BigButton>
        <BigButton $kana $wide><MailIcon />電子メール</BigButton>
      </GroupTools>
      <GroupLabel>基本</GroupLabel>
    </Group>
    <CollapseButton aria-label="リボンを折りたたむ"><Chevron up w={12} sw={1} /></CollapseButton>
  </Ribbon>
);

const ExcelFormulaBar = () => (
  <FormulaBar>
    <NameBox><input aria-label="名前ボックス" defaultValue="A1" /><Triangle color="#666" /></NameBox>
    <Dots $gap={14} />
    <FormulaTools>
      <IconButton aria-label="キャンセル"><svg width="14" height="14" viewBox="0 0 14 14" stroke="#bdbdbd" strokeWidth="1.600"><path d="m2 2 10 10M12 2 2 12" /></svg></IconButton>
      <IconButton aria-label="入力"><svg width="14" height="14" viewBox="0 0 14 14" fill="none" stroke="#bdbdbd" strokeWidth="2.400"><path d="m1 7 4 4 8-9" /></svg></IconButton>
      <IconButton aria-label="関数の挿入">
        <svg width="14" height="16" viewBox="0 0 14 16" fill="none" stroke="#555" strokeWidth="1.400"><path d="M8.500 2.500C6 1 5.700 4 5.200 7s-1 7-4.200 6M3 6h5M7.500 8.500c2-1 2.500 5 5 4M13 8.500c-2 0-3.500 4-6 4" /></svg>
      </IconButton>
    </FormulaTools>
    <FormulaInput><input aria-label="数式バー" /><Chevron w={10} color="#666" sw={2} /></FormulaInput>
  </FormulaBar>
);

const Sheet = () => (
  <SheetArea>
    <SheetViewport>
      <SheetTable>
        <thead>
          <tr>
            <Corner><svg width="17" height="17" viewBox="0 0 17 17"><path d="M17 0v17H0z" fill="#b2b2b2" /></svg></Corner>
            {COLUMNS.map(c => <ColumnHead key={c} scope="col">{c}</ColumnHead>)}
          </tr>
        </thead>
        <tbody>
          {ROWS.map(r => (
            <tr key={r}><RowHead scope="row">{r}</RowHead>{COLUMNS.map(c => <td key={c} />)}</tr>
          ))}
        </tbody>
      </SheetTable>
    </SheetViewport>
    <VerticalBar>
      <ArrowButton aria-label="上へ"><Triangle dir="up" /></ArrowButton>
      <VerticalThumb />
      <ArrowButton aria-label="下へ"><Triangle /></ArrowButton>
    </VerticalBar>
  </SheetArea>
);

const ExcelFooter = () => (
  <>
    <SheetTabs>
      <NavArrows><Triangle dir="left" color="#bbb" /><Triangle dir="right" color="#bbb" /></NavArrows>
      <SheetTab>Sheet1</SheetTab>
      <AddSheet aria-label="新しいシート">
        <svg width="17" height="17" viewBox="0 0 17 17" fill="none" stroke="#777"><circle cx="8.500" cy="8.500" r="7.500" /><path d="M8.500 4.500v8M4.500 8.500h8" strokeWidth="2" /></svg>
      </AddSheet>
      <Dots />
      <HorizontalBar>
        <ArrowButton aria-label="左へ"><Triangle dir="left" /></ArrowButton>
        <HorizontalThumb />
        <ArrowButton aria-label="右へ"><Triangle dir="right" /></ArrowButton>
      </HorizontalBar>
    </SheetTabs>
    <StatusBar>
      <StatusItem>準備完了</StatusItem>
      <StatusItem><MacroIcon /></StatusItem>
      <StatusItem $kana><AccessIcon />アクセシビリティ: 問題ありません</StatusItem>
      <ViewButtons>
        <ViewButton $active aria-label="標準"><ViewGlyph kind="normal" /></ViewButton>
        <ViewButton aria-label="ページ レイアウト"><ViewGlyph kind="layout" /></ViewButton>
        <ViewButton aria-label="改ページ プレビュー"><ViewGlyph kind="break" /></ViewButton>
      </ViewButtons>
      <IconButton aria-label="縮小"><svg width="14" height="9" viewBox="0 0 14 9" stroke="#444"><path d="M5 4.500h8" /></svg></IconButton>
      <ZoomSlider type="range" min="0" max="100" defaultValue="50" aria-label="ズーム" />
      <IconButton aria-label="拡大"><svg width="9" height="9" viewBox="0 0 9 9" stroke="#444"><path d="M.5 4.500h8M4.500.500v8" /></svg></IconButton>
      <ZoomText>100%</ZoomText>
    </StatusBar>
  </>
);

const SideChevron = ({ d }) => (
  <svg width="9" height="9" viewBox="0 0 8 8" fill="none" stroke="#505050" strokeWidth="2"><path d={d} /></svg>
);

const AccountScreen = () => (
  <AccountWindow>
    <WindowTitle><FormIcon /><h2>アカウント画面</h2><WindowControls /></WindowTitle>
    <AccountBody>
      <ScreenHeading>アカウント画面</ScreenHeading>
      <FormRow>
        <FormSide>
          <Fields>
            <label htmlFor="user">ユーザー名</label><TextBox id="user" />
            <label htmlFor="pass">パスワード</label><TextBox id="pass" />
            <label htmlFor="type">区分</label>
            <TypeSelect><select id="type"><option aria-label="なし"></option></select><Chevron w={10} color="#444" sw={1} /></TypeSelect>
          </Fields>
          <ListHeading>アカウント一覧</ListHeading>
        </FormSide>
        <FormButton>登録</FormButton>
      </FormRow>
      <DataGrid>
        <GridTable>
          <colgroup>
            <col width="41" /><col width="58" /><col width="100" /><col width="165" /><col width="96" />
          </colgroup>
          <thead>
            <tr><th /><th>選択</th><th>ID</th><th>パスワード</th><th>区分</th></tr>
          </thead>
          <tbody>
            {USERS.map((u, i) => (
              <tr key={u[0]}>
                <th>{i === 0 && <Triangle dir="right" size={9} color="#333" />}</th>
                <CheckCell $selected={i === 0}><input type="checkbox" aria-label={u[0]} /></CheckCell>
                {u.map((v, j) => <td key={j}>{v}</td>)}
              </tr>
            ))}
          </tbody>
        </GridTable>
        <GridVertical>
          <GridArrow aria-label="上へ"><Chevron up w={9} color="#505050" sw={2} /></GridArrow>
          <GridThumb />
          <DownArrow aria-label="下へ"><Chevron w={9} color="#505050" sw={2} /></DownArrow>
        </GridVertical>
        <GridHorizontal>
          <GridArrow $side aria-label="左へ"><SideChevron d="M5.500 1 2.500 4l3 3" /></GridArrow>
          <GridThumb $fill />
          <GridArrow $side aria-label="右へ"><SideChevron d="m2.500 1 3 3-3 3" /></GridArrow>
        </GridHorizontal>
      </DataGrid>
      <ButtonRow>
        <FormButton $focus>削除</FormButton>
        <FormButton>戻る</FormButton>
      </ButtonRow>
    </AccountBody>
  </AccountWindow>
);

const ConfirmDialog = () => (
  <ConfirmWindow role="dialog">
    <WindowTitle><FormIcon /><h2>メッセージ</h2><WindowControls /></WindowTitle>
    <ConfirmBody>
      <p>削除してもよろしいですか？</p>
      <ConfirmButtons>
        <ConfirmButton $focus>はい</ConfirmButton>
        <ConfirmButton>いいえ</ConfirmButton>
      </ConfirmButtons>
    </ConfirmBody>
  </ConfirmWindow>
);

const ERROR_TEXT = `アプリケーションのコンポーネントで、ハンドルされていない例外が発生しまし
た。[続行] をクリックすると、アプリケーションはこのエラーを無視し、続行しよう
とします。[終了] をクリックすると、アプリケーションは直ちに終了します。

選択 という列は見つかりません。
パラメーター名:columnName`;

const ErrorDialog = () => (
  <ErrorWindow role="alertdialog">
    <WindowTitle $plain>
      <h2>メッセージ</h2>
      <WindowControl $plain aria-label="閉じる"><WindowGlyph kind="close" color="#000" /></WindowControl>
    </WindowTitle>
    <ErrorBody><ErrorIcon /><p>{ERROR_TEXT}</p></ErrorBody>
    <ErrorButtons>
      <ErrorButton $focus><Triangle color="#000" />詳細(D)</ErrorButton>
      <ErrorButton>続行(C)</ErrorButton>
      <ErrorButton>終了(Q)</ErrorButton>
    </ErrorButtons>
  </ErrorWindow>
);

const WindowsTaskbar = () => (
  <Taskbar>
    <StartButton aria-label="スタート">
      <svg width="16" height="16" viewBox="0 0 16 16" fill="#fff"><path d="M0 2.200 6.500 1.300v6.200H0zM7.500 1.200 16 0v7.500H7.500zM0 8.500h6.500v6.200L0 13.800zM7.500 8.500H16V16l-8.500-1.200z" /></svg>
    </StartButton>
    <SearchBox>
      <svg width="17" height="17" viewBox="0 0 17 17" fill="none" stroke="#222" strokeWidth="1.400"><circle cx="10.500" cy="6.500" r="5.500" /><path d="M6.500 10.500.800 16.200" /></svg>
      <input placeholder="ここに入力して検索" aria-label="検索" />
      <Meerkats />
    </SearchBox>
    {APPS.map(([name, running, active]) => (
      <TaskButton key={name} $running={running} $active={active} aria-label={name}><AppIcon name={name} /></TaskButton>
    ))}
    <Tray>
      <Weather>
        <svg width="24" height="24" viewBox="0 0 24 24"><path d="M12 1c1 0 1.500.5 2 1.500l9 18c.7 1.500 0 2.500-1.500 2.500h-19C1 23 .3 22 1 20.500l9-18C10.500 1.500 11 1 12 1z" fill="#f2c018" /><path d="M8 18a3 3 0 0 1-.5-6c0-4 7-5 8-1 4-.5 5 6 1 7h-3l1-2h-2l1-3-3 4h2l-1 4-1-3z" fill="#3d2f12" /></svg>
        雷雨注意報
      </Weather>
      <TrayIcon aria-label="隠れているインジケーター"><Chevron up w={13} sw={1} /></TrayIcon>
      {['globe', 'meet', 'cloud', 'network', 'volume'].map(n => <TrayIcon key={n} aria-label={n}><TrayGlyph name={n} /></TrayIcon>)}
      <InputMode>A</InputMode>
      <Clock>9:24<br />2025/07/03</Clock>
      <IconButton aria-label="通知">
        <svg width="26" height="26" viewBox="0 0 26 26"><path d="M1 2h16v12H8l-4 4v-4H1z" fill="#fff" /><path d="M4 5.500h10M4 8.500h10M4 11.500h6" stroke="#222" /><circle cx="17" cy="17" r="8" fill="#2b2f2c" stroke="#8a8d8a" /><text x="17" y="21" fill="#fff" fontSize="11" fontWeight="700" textAnchor="middle">2</text></svg>
      </IconButton>
      <ShowDesktop aria-label="デスクトップの表示" />
    </Tray>
  </Taskbar>
);

export default function App() {
  return (
    <>
      <GlobalStyle />
      <Desktop>
        <ExcelHeader />
        <ExcelRibbon />
        <ExcelFormulaBar />
        <Sheet />
        <ExcelFooter />
        <WindowsTaskbar />
        <AccountScreen />
        <ConfirmDialog />
        <ErrorDialog />
      </Desktop>
    </>
  );
}
